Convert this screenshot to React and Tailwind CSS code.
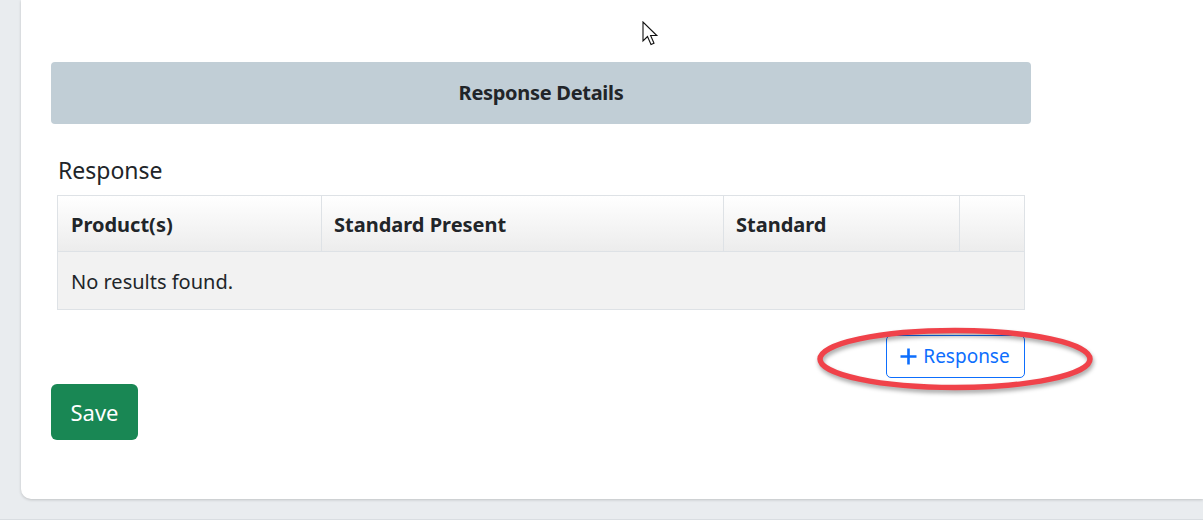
export default function App() {
  const font = { fontFamily: '"Noto Sans", "Open Sans", sans-serif' };
  return (
    <div className="h-[520px] w-[1203px] overflow-hidden bg-[#e9ecef] flex flex-col" style={font}>
      <div className="flex flex-1 pl-[21px]">
        <div className="relative flex-1 h-[499px] bg-white rounded-bl-[10px] shadow-[0_1px_3px_rgba(0,0,0,0.18)] pl-[30px] pt-[62px]">
          {/* cursor */}
          <svg className="absolute left-[621px] top-[21px]" width="20" height="28" viewBox="0 0 20 28">
            <path d="M1 1 L1 20 L5.5 15.5 L9 23.5 L12 22.2 L8.6 14.5 L14.8 14.5 Z" fill="white" stroke="#111" strokeWidth="1.1" strokeLinejoin="miter" />
          </svg>
          <div className="w-[980px]">
            <div className="h-[62px] bg-[#c1ced6] rounded-[4px] flex items-center justify-center">
              <span className="text-[20px] font-bold text-[#212529] tracking-[-0.3px]">Response Details</span>
            </div>
            <div className="px-[6px]">
              <div className="mt-[31px] mb-[10px] h-[30px] leading-[30px] text-[23px] text-[#212529] pl-[1px]">Response</div>
              <table className="w-full border-collapse border border-[#dee2e6] text-[20px] text-[#212529]">
                <thead>
                  <tr className="h-[56px] bg-gradient-to-b from-white to-[#ececec]">
                    <th className="w-[264px] border border-[#dee2e6] text-left font-bold px-[13px] pt-[3px]">Product(s)</th>
                    <th className="w-[402px] border border-[#dee2e6] text-left font-bold px-[12px] pt-[3px]">Standard Present</th>
                    <th className="w-[236px] border border-[#dee2e6] text-left font-bold px-[12px] pt-[3px]">Standard</th>
                    <th className="border border-[#dee2e6]"></th>
                  </tr>
                </thead>
                <tbody>
                  <tr className="h-[58px] bg-[#f2f2f2]">
                    <td colSpan={4} className="px-[13px] pt-[2px]">No results found.</td>
                  </tr>
                </tbody>
              </table>
              <div className="relative mt-[25px] flex justify-end">
                <button className="h-[43px] w-[139px] border border-[#0d6efd] rounded-[5px] text-[#0d6efd] text-[19px] flex items-center justify-center gap-[5px] bg-white pr-[2px]">
                  <svg width="19" height="19" viewBox="0 0 19 19"><path d="M9.5 1.5v16M1.5 9.5h16" stroke="#0d6efd" strokeWidth="2.6" /></svg>
                  <span>Response</span>
                </button>
                <svg className="absolute left-[753px] top-[-8px] pointer-events-none" width="295" height="80" viewBox="0 0 295 80" style={{ filter: 'drop-shadow(1px 3px 2px rgba(0,0,0,0.35))' }}>
                  <ellipse cx="145" cy="32" rx="135" ry="28.5" fill="none" stroke="#f0424a" strokeWidth="5.5" />
                </svg>
              </div>
            </div>
            <button className="mt-[6px] h-[56px] w-[87px] bg-[#198754] rounded-[6px] text-white text-[22px] flex items-center justify-center">Save</button>
          </div>
        </div>
      </div>
      <div className="h-[21px] border-b border-[#d9dde1]"></div>
    </div>
  );
}
